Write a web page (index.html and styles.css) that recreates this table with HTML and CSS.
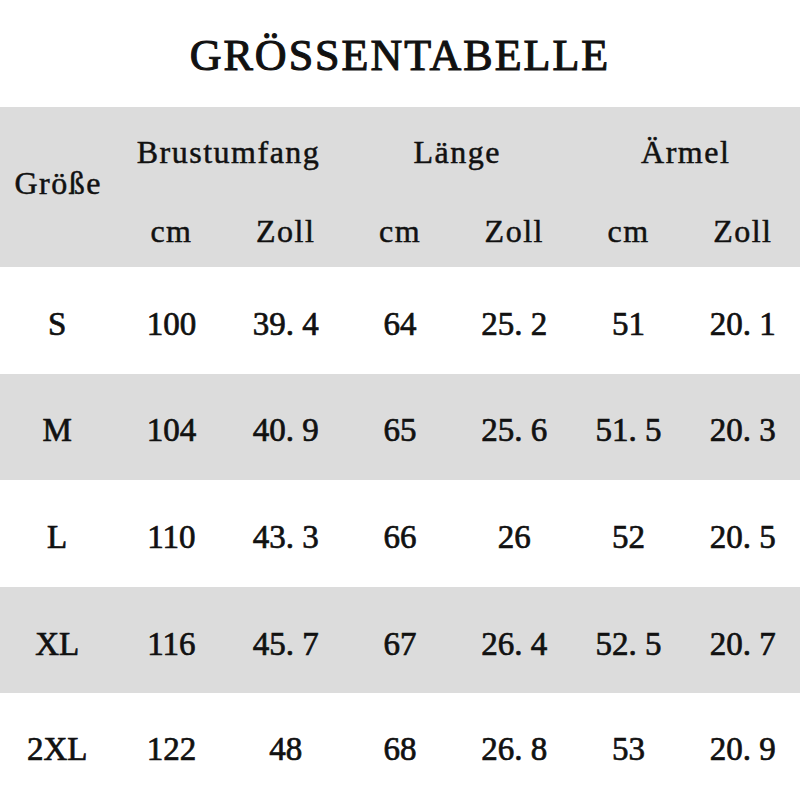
FILE: index.html
```html
<!DOCTYPE html>
<html lang="de">
<head>
<meta charset="utf-8">
<title>Größentabelle</title>
<link rel="stylesheet" href="styles.css">
</head>
<body>
<div class="page">
  <h1 class="title">GRÖSSENTABELLE</h1>
  <div class="head">
    <div class="hcell size-h">Größe</div>
    <div class="hcell group g1">Brustumfang</div>
    <div class="hcell group g2">Länge</div>
    <div class="hcell group g3">Ärmel</div>
    <div class="hcell unit">cm</div>
    <div class="hcell unit">Zoll</div>
    <div class="hcell unit">cm</div>
    <div class="hcell unit">Zoll</div>
    <div class="hcell unit">cm</div>
    <div class="hcell unit">Zoll</div>
  </div>
  <div class="row">
    <div class="cell">S</div><div class="cell">100</div><div class="cell">39<span class="dp">.</span>4</div><div class="cell">64</div><div class="cell">25<span class="dp">.</span>2</div><div class="cell">51</div><div class="cell">20<span class="dp">.</span>1</div>
  </div>
  <div class="row alt">
    <div class="cell">M</div><div class="cell">104</div><div class="cell">40<span class="dp">.</span>9</div><div class="cell">65</div><div class="cell">25<span class="dp">.</span>6</div><div class="cell">51<span class="dp">.</span>5</div><div class="cell">20<span class="dp">.</span>3</div>
  </div>
  <div class="row">
    <div class="cell">L</div><div class="cell">110</div><div class="cell">43<span class="dp">.</span>3</div><div class="cell">66</div><div class="cell">26</div><div class="cell">52</div><div class="cell">20<span class="dp">.</span>5</div>
  </div>
  <div class="row alt">
    <div class="cell">XL</div><div class="cell">116</div><div class="cell">45<span class="dp">.</span>7</div><div class="cell">67</div><div class="cell">26<span class="dp">.</span>4</div><div class="cell">52<span class="dp">.</span>5</div><div class="cell">20<span class="dp">.</span>7</div>
  </div>
  <div class="row last">
    <div class="cell">2XL</div><div class="cell">122</div><div class="cell">48</div><div class="cell">68</div><div class="cell">26<span class="dp">.</span>8</div><div class="cell">53</div><div class="cell">20<span class="dp">.</span>9</div>
  </div>
</div>
</body>
</html>
```
FILE: styles.css
```css
html, body {
  margin: 0;
  padding: 0;
  background: #ffffff;
}
.page {
  width: 800px;
  height: 800px;
  display: flex;
  flex-direction: column;
  font-family: "Liberation Serif", "Times New Roman", serif;
  color: #111111;
}
.title {
  height: 107px;
  margin: 0;
  display: flex;
  align-items: center;
  justify-content: center;
  padding-top: 4px;
  box-sizing: border-box;
  font-family: "Liberation Serif", serif;
  font-weight: normal;
  font-size: 44px;
  letter-spacing: 2px;
  -webkit-text-stroke: 1.1px #111;
}
.head {
  height: 160px;
  background: #dcdcdc;
  display: grid;
  grid-template-columns: repeat(7, 1fr);
  grid-template-rows: 80px 80px;
}
.hcell {
  display: flex;
  align-items: center;
  justify-content: center;
  font-size: 32px;
  letter-spacing: 1.5px;
  -webkit-text-stroke: 0.5px #111;
}
.size-h {
  grid-row: 1 / 3;
  grid-column: 1;
  padding-bottom: 8px;
  padding-left: 2px;
}
.group {
  padding-top: 10px;
}
.g1 { grid-column: 2 / 4; }
.g2 { grid-column: 4 / 6; }
.g3 { grid-column: 6 / 8; }
.unit {
  grid-row: 2;
  padding-top: 8px;
}
.row {
  flex: 1;
  display: grid;
  grid-template-columns: repeat(7, 1fr);
  background: #ffffff;
}
.row.alt {
  background: #dcdcdc;
}
.cell {
  display: flex;
  align-items: center;
  justify-content: center;
  padding-top: 8px;
  font-size: 33px;
  -webkit-text-stroke: 0.7px #111;
}
.dp {
  display: inline-block;
  width: 0.5em;
  text-align: left;
}
.row.last .cell {
  padding-top: 6px;
}
```
